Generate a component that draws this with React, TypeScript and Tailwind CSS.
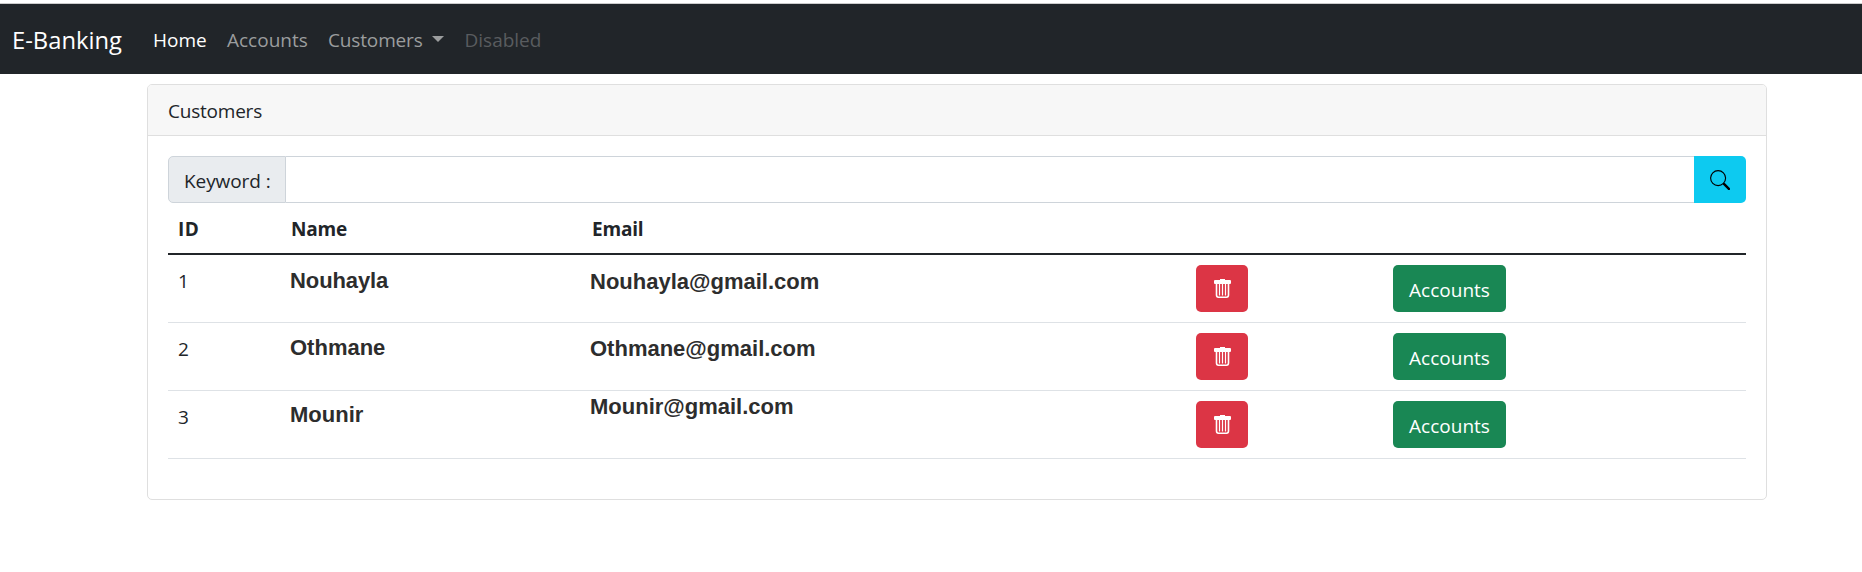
import React from "react";

const customers = [
  { id: 1, name: "Nouhayla", email: "Nouhayla@gmail.com", namePad: "pt-[11px] tracking-[-0.1px]", emailPad: "pt-[12px]" },
  { id: 2, name: "Othmane", email: "Othmane@gmail.com", namePad: "pt-[10px]", emailPad: "pt-[11px]" },
  { id: 3, name: "Mounir", email: "Mounir@gmail.com", namePad: "pt-[9px]", emailPad: "pt-[1px]" },
];

const columns = "grid grid-cols-[112px_302px_604px_197px_1fr]";

function SearchIcon() {
  return (
    <svg width="20" height="20" viewBox="0 0 20 20" fill="none" stroke="currentColor">
      <circle cx="8.1" cy="8.1" r="7.500" strokeWidth="1.150" />
      <path d="M13.400 13.400L14.500 14.500" strokeWidth="1.500" />
      <path d="M14.200 14.200L18.900 18.900" strokeWidth="2.400" strokeLinecap="round" />
    </svg>
  );
}

function TrashIcon() {
  return (
    <svg width="17" height="19" viewBox="0 0 17 19" fill="none">
      <path d="M6 0h5v1h5q1 0 1 1v2q0 1-1 1H1Q0 5 0 4V2Q0 1 1 1H6z" fill="#fff" />
      <path d="M2.500 4V16Q2.500 18.200 4.500 18.200H12.500Q14.500 18.200 14.500 16V4" stroke="#fff" strokeWidth="1.600" />
      <path d="M5.500 5V16.500M8.500 5V16.500M11.500 5V16.500" stroke="#fff" strokeWidth="1.200" />
    </svg>
  );
}

function Navbar() {
  return (
    <nav className="flex h-[71px] items-center border-t border-[#cccccc] bg-[#212529] pl-[12px] pt-0.5 text-[19px] leading-[30px] text-[#9b9d9e]">
      <a className="w-[141px] text-[23.75px] leading-[38px] text-white">E-Banking</a>
      <a className="w-[74px] text-white">Home</a>
      <a className="w-[101px]">Accounts</a>
      <a className="flex w-[136.5px] items-center">
        <span className="w-[104px] tracking-[-0.15px]">Customers</span>
        <svg className="-mt-0.5" width="12" height="6" viewBox="0 0 12 6" fill="currentColor"><path d="M0 0h12L6 6z" /></svg>
      </a>
      <a className="text-[#595c5f]">Disabled</a>
    </nav>
  );
}

export default function App() {
  return (
    <div className="h-[572px] bg-white pt-[3px] font-['Open_Sans',sans-serif] text-[19px] leading-[30px] text-[#212529]">
      <Navbar />
      <main className="ml-[147px] mt-2.5 h-[416px] w-[1620px] overflow-hidden rounded-[5px] border border-[#dfdfdf] bg-white">
        <header className="h-[51px] border-b border-[#dfdfdf] bg-[#f7f7f7] px-5 pt-[11px] tracking-[-0.22px]">Customers</header>
        <div className="p-5">
          <div className="flex h-[47px]">
            <label className="w-[118px] rounded-l-[5px] border border-[#ced4da] bg-[#e9ecef] pl-[15px] pt-[9px] tracking-[-0.08px]">Keyword :</label>
            <input className="min-w-0 flex-1 border-y border-[#ced4da] bg-white px-4 outline-none" />
            <button className="flex w-[52px] items-center justify-center rounded-r-[5px] bg-[#0dcaf0] text-black">
              <SearchIcon />
            </button>
          </div>
          <div className={`${columns} h-[52px] border-b-2 border-[#212529] pt-[11px] font-bold tracking-[-0.2px]`}>
            <span className="pl-2.5 tracking-[0.5px]">ID</span>
            <span className="pl-[11px]">Name</span>
            <span className="pl-2.5">Email</span>
          </div>
          {customers.map((c) => (
            <div key={c.id} className={`${columns} h-[68px] border-b border-[#dee2e6]`}>
              <span className="pl-2.5 pt-[11px]">{c.id}</span>
              <span className={`pl-[10px] font-['Liberation_Sans',sans-serif] text-[22px] font-bold leading-[29px] text-[#2d2d2d] ${c.namePad}`}>{c.name}</span>
              <span className={`pl-[8px] font-['Liberation_Sans',sans-serif] text-[22px] font-bold leading-[29px] text-[#2d2d2d] ${c.emailPad}`}>{c.email}</span>
              <span className="pl-2.5 pt-2.5">
                <button className="flex h-[47px] w-[52px] items-start rounded-[5px] bg-[#dc3545] pl-[18px] pt-3.5">
                  <TrashIcon />
                </button>
              </span>
              <span className="pl-2.5 pt-2.5">
                <button className="flex h-[47px] w-[113px] items-start justify-center rounded-[5px] bg-[#198754] pt-2.5 text-white">Accounts</button>
              </span>
            </div>
          ))}
        </div>
      </main>
    </div>
  );
}
